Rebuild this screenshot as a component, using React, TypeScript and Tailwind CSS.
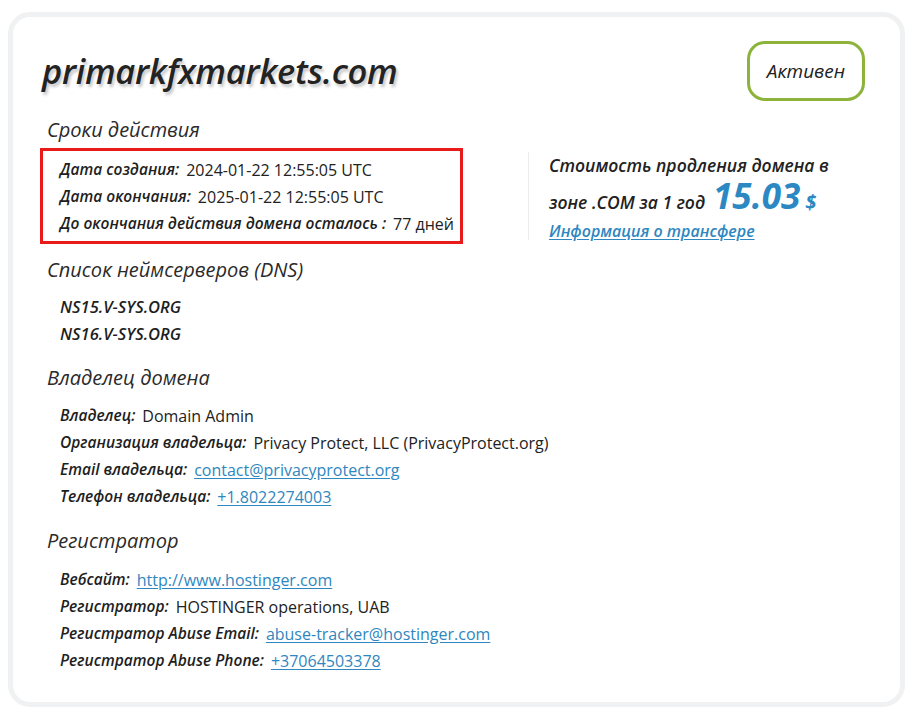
import React from "react";

const labelCls = "italic font-semibold text-[15.5px] text-[#1e1e1e] mr-[7px]";
const linkCls = "text-[#2f87c0] underline underline-offset-2";

function Row({ label, children }: { label: string; children: React.ReactNode }) {
  return (
    <div className="h-[27px] flex items-center whitespace-nowrap text-[16px] text-[#222]">
      <span className={labelCls}>{label}</span>
      <span>{children}</span>
    </div>
  );
}

function Heading({ children }: { children: React.ReactNode }) {
  return <div className="italic text-[20px] leading-[28px] text-[#2a2a2a] ml-[5px]">{children}</div>;
}

export default function App() {
  return (
    <div className="w-[915px] h-[715px] bg-white pt-[12px] pl-[8px]" style={{ fontFamily: '"Open Sans", "Noto Sans", sans-serif' }}>
      <div className="w-[897px] h-[695px] border-[5px] border-[#f0f1f2] rounded-[22px] bg-white pl-[29px] pr-[35px] pt-[24px]">
        <div className="flex items-center justify-between h-[60px]">
          <div className="italic font-semibold text-[34.5px] text-[#232323] tracking-[-0.3px] [text-shadow:2px_3px_3px_rgba(0,0,0,0.22)]">
            primarkfxmarkets.com
          </div>
          <div className="w-[118px] h-[60px] border-[3px] border-[#8db33a] rounded-[18px] flex items-center justify-center italic font-medium text-[19px] text-[#222]">
            Активен
          </div>
        </div>

        <div className="mt-[15px]">
          <Heading>Сроки действия</Heading>
        </div>

        <div className="flex items-start mt-[4px]">
          <div className="w-[423px] border-[3px] border-[#e81a1a] pl-[17px] pt-[5px] pb-[4px] -ml-[2px]">
            <Row label="Дата создания:">2024-01-22 12:55:05 UTC</Row>
            <Row label="Дата окончания:">2025-01-22 12:55:05 UTC</Row>
            <Row label="До окончания действия домена осталось :">77 дней</Row>
          </div>
          <div className="ml-[65px] mt-[4px] h-[88px] border-l border-[#ececec] pl-[20px]">
            <div className="italic font-semibold text-[17.5px] leading-[26px] text-[#222]">
              Стоимость продления домена в
            </div>
            <div className="flex items-baseline italic font-semibold text-[17.5px] text-[#222] leading-[36px]">
              <span>зоне .COM за 1 год</span>
              <span className="ml-[8px] text-[35px] font-bold text-[#2b88c2] leading-[36px]">15.03</span>
              <span className="ml-[5px] text-[20px] font-bold text-[#2b88c2]">$</span>
            </div>
            <div className={"italic font-semibold text-[16px] leading-[22px] " + linkCls}>Информация о трансфере</div>
          </div>
        </div>

        <div className="mt-[12px]">
          <Heading>Список неймсерверов (DNS)</Heading>
        </div>
        <div className="mt-[10px] pl-[18px]">
          <div className="h-[27px] flex items-center italic font-semibold text-[16.5px] text-[#1e1e1e]">NS15.V-SYS.ORG</div>
          <div className="h-[27px] flex items-center italic font-semibold text-[16.5px] text-[#1e1e1e]">NS16.V-SYS.ORG</div>
        </div>

        <div className="mt-[16px]">
          <Heading>Владелец домена</Heading>
        </div>
        <div className="mt-[10px] pl-[18px]">
          <Row label="Владелец:">Domain Admin</Row>
          <Row label="Организация владельца:">Privacy Protect, LLC (PrivacyProtect.org)</Row>
          <Row label="Email владельца:"><span className={linkCls}>contact@privacyprotect.org</span></Row>
          <Row label="Телефон владельца:"><span className={linkCls}>+1.8022274003</span></Row>
        </div>

        <div className="mt-[17px]">
          <Heading>Регистратор</Heading>
        </div>
        <div className="mt-[11px] pl-[18px]">
          <Row label="Вебсайт:"><span className={linkCls}>http://www.hostinger.com</span></Row>
          <Row label="Регистратор:">HOSTINGER operations, UAB</Row>
          <Row label="Регистратор Abuse Email:"><span className={linkCls}>abuse-tracker@hostinger.com</span></Row>
          <Row label="Регистратор Abuse Phone:"><span className={linkCls}>+37064503378</span></Row>
        </div>
      </div>
    </div>
  );
}
